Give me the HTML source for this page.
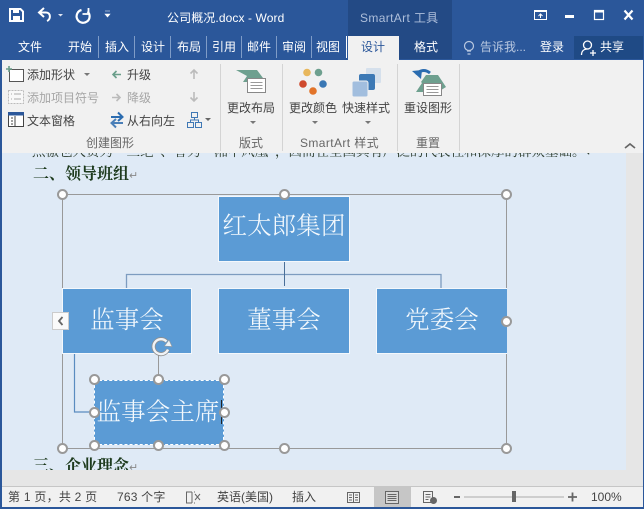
<!DOCTYPE html>
<html><head><meta charset="utf-8">
<style>
html,body{margin:0;padding:0}
body{width:644px;height:509px;overflow:hidden;position:relative;background:#2b579a;font-family:"Liberation Sans","Noto Sans CJK SC",sans-serif;font-size:12px}
.a{position:absolute;white-space:nowrap;line-height:1}
.tab{color:#fff;font-size:12px;top:41px}
.r{color:#444;font-size:12px}
.g{color:#a6a6a6}
.sep{position:absolute;background:#d4d4d4;width:1px;top:64px;height:87px}
.tsep{position:absolute;background:#7f9cc7;width:1px;top:36px;height:22px}
.lb{color:#666;font-size:12px;top:137px}
.box{position:absolute;background:#5b9bd5;border:1px solid #f4f8fc;box-sizing:border-box;color:#f4f9fd;font-family:"Noto Serif CJK SC","Liberation Serif",serif;font-size:24.6px;text-align:center;white-space:nowrap;font-weight:300}
.h{position:absolute;width:7px;height:7px;border-radius:50%;background:#fff;border:2px solid #999;box-sizing:content-box}
.st{position:absolute;color:#444;font-size:12px;top:491px;line-height:1;white-space:nowrap}
svg{position:absolute;overflow:visible}
</style></head><body>

<!-- title bar -->
<div class="a" style="left:348px;top:0;width:104px;height:59px;background:#234a85"></div>
<div class="a" style="left:167px;top:12px;color:#fff;font-size:12px;letter-spacing:.1px">公司概况.docx - Word</div>
<div class="a" style="left:360px;top:12px;color:#aebfdb;font-size:12px;letter-spacing:.35px">SmartArt 工具</div>

<svg style="left:0;top:0" width="140" height="30">
<path d="M10 9h10.500l2.500 2.500V21H10z" fill="none" stroke="#fff" stroke-width="2"/><path d="M13 9h6v4h-6zM13 16h7v5h-7z" fill="#fff"/>
<path d="M44 8l-5 4.500 5 4.500" fill="none" stroke="#fff" stroke-width="2"/><path d="M40 12.500h6c5 0 5 7 1 8.500" fill="none" stroke="#fff" stroke-width="2"/>
<path d="M58 14h5l-2.500 2.500z" fill="#dfe6f2"/>
<path d="M87.500 11.500a6.500 6.500 0 1 1-6-1.500" fill="none" stroke="#fff" stroke-width="2.200"/><path d="M88.500 8v6h-6" fill="none" stroke="#fff" stroke-width="1.800"/>
<path d="M105 11h5M105 14h5l-2.500 3z" fill="#fff" stroke="#fff" stroke-width=".6"/>
</svg>
<svg style="left:530px;top:5px" width="114" height="22">
<rect x="4.500" y="5.500" width="12" height="9" fill="none" stroke="#fff" stroke-width="1"/><path d="M4 5h13v2H4z" fill="#fff"/><path d="M10.500 13V9M8.500 11l2-2 2 2" fill="none" stroke="#fff"/>
<path d="M35 10h9v3h-9z" fill="#fff"/>
<rect x="64.500" y="5.500" width="9" height="9" fill="none" stroke="#fff" stroke-width="1.200"/><path d="M64 5h10v2.500H64z" fill="#fff"/>
<path d="M94.500 5.500l8 9M102.500 5.500l-8 9" stroke="#fff" stroke-width="2.200"/>
</svg>

<!-- tabs -->
<div class="a tab" style="left:18px">文件</div>
<div class="a tab" style="left:68px">开始</div>
<div class="a tab" style="left:105px">插入</div>
<div class="a tab" style="left:141px">设计</div>
<div class="a tab" style="left:177px">布局</div>
<div class="a tab" style="left:212px">引用</div>
<div class="a tab" style="left:247px">邮件</div>
<div class="a tab" style="left:282px">审阅</div>
<div class="a tab" style="left:316px">视图</div>
<div class="tsep" style="left:98px"></div><div class="tsep" style="left:134px"></div><div class="tsep" style="left:170px"></div><div class="tsep" style="left:206px"></div><div class="tsep" style="left:241px"></div><div class="tsep" style="left:276px"></div><div class="tsep" style="left:311px"></div><div class="tsep" style="left:346px;background:#fff"></div>
<div class="a" style="left:348px;top:36px;width:51px;height:24px;background:#f1f1f1"></div>
<div class="a" style="left:361px;top:41px;color:#2b579a;font-size:12px">设计</div>
<div class="a tab" style="left:414px">格式</div>
<svg style="left:462px;top:39px" width="16" height="18"><circle cx="7" cy="7" r="4.500" fill="none" stroke="#b9c8e0" stroke-width="1.200"/><path d="M5 12h4M5.500 15h3" stroke="#b9c8e0" stroke-width="1.200"/></svg>
<div class="a" style="left:480px;top:41px;color:#b9c8e0;font-size:12px">告诉我...</div>
<div class="a tab" style="left:540px">登录</div>
<div class="a" style="left:574px;top:36px;width:69px;height:23px;background:#1f4a85"></div>
<svg style="left:580px;top:39px" width="18" height="18"><circle cx="7.500" cy="6" r="4" fill="none" stroke="#fff" stroke-width="1.300"/><path d="M1.500 16c0-4 2.500-6 6-6M10 14h6M13 11v6" fill="none" stroke="#fff" stroke-width="1.300"/></svg>
<div class="a tab" style="left:600px">共享</div>

<!-- ribbon -->
<div class="a" style="left:2px;top:60px;width:641px;height:93px;background:#f1f1f1"></div>
<div class="sep" style="left:220px"></div><div class="sep" style="left:282px"></div><div class="sep" style="left:397px"></div><div class="sep" style="left:459px"></div>

<svg style="left:6px;top:66px" width="20" height="18"><rect x="3.500" y="3.500" width="14" height="12" fill="#fff" stroke="#555"/><path d="M3 0v6M0 3h6" stroke="#6a9e8a" stroke-width="1.600"/></svg>
<div class="a r" style="left:27px;top:69px">添加形状</div>
<svg style="left:84px;top:73px" width="7" height="4"><path d="M0 0h6l-3 3z" fill="#777"/></svg>
<svg style="left:8px;top:90px" width="18" height="15"><rect x=".5" y=".5" width="15" height="13" fill="#f8f8f8" stroke="#bbb" stroke-dasharray="2 1"/><path d="M3 4h1M6 4h7M3 9h1M6 9h7" stroke="#aaa"/></svg>
<div class="a r g" style="left:27px;top:92px">添加项目符号</div>
<svg style="left:8px;top:112px" width="17" height="16"><rect x=".5" y=".5" width="15" height="14" fill="#fff" stroke="#444"/><path d="M0 0h16v3.500H0z" fill="#2b579a"/><path d="M3 6h2M3 9h2M3 12h2M7 4v11" stroke="#444"/></svg>
<div class="a r" style="left:27px;top:115px">文本窗格</div>

<svg style="left:111px;top:69px" width="12" height="12"><path d="M10 5.500H2M5.500 2L2 5.500 5.500 9" fill="none" stroke="#6a9e8a" stroke-width="1.600"/></svg>
<div class="a r" style="left:127px;top:69px">升级</div>
<svg style="left:111px;top:92px" width="12" height="12"><path d="M1 5.500h8M5.500 2L9 5.500 5.500 9" fill="none" stroke="#bbb" stroke-width="1.600"/></svg>
<div class="a r g" style="left:127px;top:92px">降级</div>
<svg style="left:109px;top:111px" width="16" height="18"><path d="M2 6h11M9 1.500L13.500 6 9 10" fill="none" stroke="#2b6cb0" stroke-width="2"/><path d="M14 12H3M7 8L2.500 12 7 16.500" fill="none" stroke="#4a7fb8" stroke-width="2"/></svg>
<div class="a r" style="left:127px;top:115px">从右向左</div>
<svg style="left:188px;top:68px" width="12" height="12"><path d="M6 11V2M2.500 5.500L6 2l3.500 3.500" fill="none" stroke="#bbb" stroke-width="1.600"/></svg>
<svg style="left:188px;top:91px" width="12" height="12"><path d="M6 1v9M2.500 6.500L6 10l3.500-3.500" fill="none" stroke="#bbb" stroke-width="1.600"/></svg>
<svg style="left:187px;top:112px" width="26" height="16"><rect x="4.500" y=".5" width="6" height="5" fill="none" stroke="#3f78b5"/><rect x=".5" y="10.500" width="6" height="5" fill="none" stroke="#3f78b5"/><rect x="8.500" y="10.500" width="6" height="5" fill="none" stroke="#3f78b5"/><path d="M7.500 5.500v2.500M3.500 10.500V8h8v2.500" fill="none" stroke="#3f78b5"/><path d="M18 6h6l-3 3z" fill="#666"/></svg>
<div class="a lb" style="left:86px">创建图形</div>

<!-- layout icon -->
<svg style="left:236px;top:69px" width="32" height="30"><path d="M0 1h21l9 12H7l4-6z" fill="#6ea08f"/><rect x="11.500" y="9.500" width="18" height="14" fill="#fff" stroke="#888"/><path d="M14.500 13.500h12M14.500 16.500h12M14.500 19.500h12" stroke="#999"/></svg>
<div class="a r" style="left:227px;top:102px">更改布局</div>
<svg style="left:250px;top:121px" width="7" height="4"><path d="M0 0h6l-3 3z" fill="#777"/></svg>
<div class="a lb" style="left:239px">版式</div>

<!-- colors -->
<svg style="left:298px;top:68px" width="32" height="32"><circle cx="9" cy="4.500" r="3.800" fill="#e8b75c"/><circle cx="20.500" cy="4.500" r="3.800" fill="#6ea08f"/><circle cx="25" cy="16" r="3.800" fill="#3a78b5"/><circle cx="15" cy="23" r="3.800" fill="#e2742a"/><circle cx="5" cy="16" r="3.800" fill="#cf4a2e"/></svg>
<div class="a r" style="left:289px;top:102px">更改颜色</div>
<svg style="left:312px;top:121px" width="7" height="4"><path d="M0 0h6l-3 3z" fill="#777"/></svg>
<!-- quick style -->
<svg style="left:352px;top:68px" width="32" height="32"><rect x="14" y="0" width="15" height="15" rx="1" fill="#d5e0ec"/><rect x="7" y="6" width="16" height="16" rx="2" fill="#3d79b5"/><rect x="0" y="13" width="16" height="16" rx="2" stroke="#f1f1f1" fill="#a2bede"/></svg>
<div class="a r" style="left:342px;top:102px">快速样式</div>
<svg style="left:365px;top:121px" width="7" height="4"><path d="M0 0h6l-3 3z" fill="#777"/></svg>
<div class="a lb" style="left:300px;letter-spacing:.4px">SmartArt 样式</div>

<!-- reset -->
<svg style="left:411px;top:66px" width="34" height="32"><path d="M5 26l6-9-1-1 5-7h12l8 12-8 5z" fill="#6ea08f"/><path d="M19 7C14 3 8 4 6 9" fill="none" stroke="#2b6cb0" stroke-width="3"/><path d="M1 5l9 8 1-9z" fill="#2b6cb0"/><rect x="12.500" y="17.500" width="18" height="12" fill="#fff" stroke="#888"/><path d="M15.500 20.500h12M15.500 23.500h12M15.500 26.500h12" stroke="#999"/></svg>
<div class="a r" style="left:404px;top:102px">重设图形</div>
<div class="a lb" style="left:416px">重置</div>

<svg style="left:624px;top:142px" width="12" height="7"><path d="M1 6l5-4 5 4" fill="none" stroke="#666" stroke-width="1.700"/></svg>

<!-- document -->
<div class="a" style="left:2px;top:153px;width:624px;height:317px;background:#dfeaf6;overflow:hidden">
  <div class="a" style="left:30px;top:-9px;color:#2a3a2a;font-size:13.500px;font-family:'Noto Serif CJK SC',serif">点檄也人资为“三绝”、誉为“湘中风凰”，因而在全国具有广泛的代表性和深厚的群众基础。↵</div>
  <div class="a" style="left:31px;top:12px;color:#1d3a1d;font-size:16px;font-weight:bold;font-family:'Noto Serif CJK SC',serif">二、领导班组<span style="font-weight:normal;color:#888;font-size:11px">↵</span></div>
  <div class="a" style="left:31px;top:304px;color:#1d3a1d;font-size:16px;font-weight:bold;font-family:'Noto Serif CJK SC',serif">三、企业理念<span style="font-weight:normal;color:#888;font-size:11px">↵</span></div>
</div>
<div class="a" style="left:626px;top:153px;width:17px;height:334px;background:#e6e6e6"></div>
<div class="a" style="left:2px;top:470px;width:624px;height:17px;background:#e6e6e6"></div>

<!-- selection frame -->
<div class="a" style="left:62px;top:194px;width:445px;height:255px;border:1px solid #999;box-sizing:border-box"></div>

<!-- connectors -->
<svg style="left:0;top:0;pointer-events:none" width="644" height="509">
<path d="M126.500 289v-14.500h314.500V289" fill="none" stroke="#7d9cc0" stroke-width="1.300"/>
<path d="M284.500 262v24" stroke="#4a6f99" stroke-width="1" fill="none"/>
<path d="M74.500 353v59H92" fill="none" stroke="#5a8cc0" stroke-width="1.200"/>
<path d="M158.500 353v26" stroke="#999" stroke-width="1"/>
</svg>

<div class="box" style="left:218px;top:196px;width:132px;height:66px;line-height:56px">红太郎集团</div>
<div class="box" style="left:62px;top:288px;width:130px;height:66px;line-height:59px">监事会</div>
<div class="box" style="left:218px;top:288px;width:132px;height:66px;line-height:59px">董事会</div>
<div class="box" style="left:376px;top:288px;width:131px;height:66px;line-height:59px;border-right:none">党委会</div>
<div class="box" style="left:94px;top:380px;width:130px;height:65px;line-height:59px;border:1px dashed #fff;padding-right:2px">监事会主席</div>
<div class="a" style="left:221px;top:400px;width:1px;height:24px;background:#222"></div>

<!-- text pane handle -->
<div class="a" style="left:52px;top:312px;width:17px;height:18px;background:#fafafa;border:1px solid #ccc;box-sizing:border-box"></div>
<svg style="left:57px;top:316px" width="8" height="10"><path d="M5.500 1L2 5l3.500 4" fill="none" stroke="#666" stroke-width="1.800"/></svg>

<!-- rotate -->
<svg style="left:150px;top:336px" width="24" height="22"><path d="M16.500 5.500a7.500 7.500 0 1 0 1.500 8" fill="none" stroke="#8f8f8f" stroke-width="4"/><path d="M16.500 5.500a7.500 7.500 0 1 0 1.500 8" fill="none" stroke="#f0f3f6" stroke-width="2.400"/><path d="M14.500 10L22 10.500 19 4z" fill="#eef3f7" stroke="#999" stroke-width=".6"/></svg>

<!-- handles -->
<div class="h" style="left:57px;top:189px"></div>
<div class="h" style="left:279px;top:189px"></div>
<div class="h" style="left:501px;top:189px"></div>
<div class="h" style="left:501px;top:316px"></div>
<div class="h" style="left:57px;top:443px"></div>
<div class="h" style="left:279px;top:443px"></div>
<div class="h" style="left:501px;top:443px"></div>
<div class="h" style="left:89px;top:374px"></div>
<div class="h" style="left:153px;top:374px"></div>
<div class="h" style="left:219px;top:374px"></div>
<div class="h" style="left:89px;top:407px"></div>
<div class="h" style="left:219px;top:407px"></div>
<div class="h" style="left:89px;top:440px"></div>
<div class="h" style="left:153px;top:440px"></div>
<div class="h" style="left:219px;top:440px"></div>

<!-- status bar -->
<div class="a" style="left:2px;top:486px;width:641px;height:21px;background:#f1f1f1;border-top:1px solid #c6c6c6;box-sizing:border-box"></div>
<div class="st" style="left:8px;letter-spacing:.25px">第 1 页，共 2 页</div>
<div class="st" style="left:117px;letter-spacing:.2px">763 个字</div>
<svg style="left:185px;top:491px" width="18" height="14"><path d="M7 1H1.500v11H7M7 1v11" fill="none" stroke="#666"/><path d="M10 3l5 6M15 3l-5 6" stroke="#666"/><path d="M9 1h1M9 12h1" stroke="#666"/></svg>
<div class="st" style="left:217px">英语(美国)</div>
<div class="st" style="left:292px">插入</div>
<svg style="left:347px;top:491px" width="14" height="13"><path d="M.5 1.500h6v10h-6zM6.500 1.500h6v10h-6zM2 4h3M2 6.500h3M2 9h3M8 4h3M8 6.500h3M8 9h3" fill="none" stroke="#666"/></svg>
<div class="a" style="left:374px;top:487px;width:37px;height:20px;background:#c6c6c6"></div>
<svg style="left:385px;top:491px" width="14" height="13"><rect x=".5" y=".5" width="13" height="12" fill="#d8d8d8" stroke="#666"/><path d="M2.500 3.500h9M2.500 5.500h9M2.500 7.500h9M2.500 9.500h9" stroke="#666"/></svg>
<svg style="left:423px;top:491px" width="15" height="14"><path d="M.5.500h9v11h-9zM2.500 3.500h5M2.500 6h5M2.500 8.500h3" fill="#f1f1f1" stroke="#666"/><circle cx="10.500" cy="9.500" r="3.500" fill="#666"/></svg>
<svg style="left:452px;top:490px" width="128" height="14"><path d="M2 7h6" stroke="#666" stroke-width="2"/><path d="M12 7h100" stroke="#aaa"/><path d="M60 1h4v11h-4z" fill="#666"/><path d="M116 7h9M120.500 2.500v9" stroke="#666" stroke-width="1.800"/></svg>
<div class="st" style="left:591px">100%</div>
<div class="a" style="left:0;top:507px;width:644px;height:2px;background:#2b579a"></div>
</body></html>
